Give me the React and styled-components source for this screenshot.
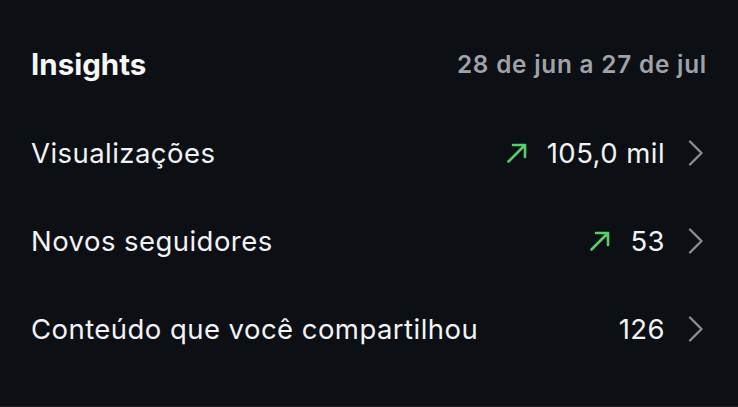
import React from 'react';
import styled, { createGlobalStyle } from 'styled-components';

const GlobalStyle = createGlobalStyle`
  html, body {
    margin: 0;
    padding: 0;
    background: #0c0f14;
  }

  body {
    font-family: Inter, "Noto Sans", "Liberation Sans", sans-serif;
    -webkit-font-smoothing: antialiased;
  }
`;

const StyledPanel = styled.section`
  box-sizing: border-box;
  height: 407px;
  padding: 20px 31px 0 31px;
  background: #0c0f14;
  border-bottom: 1px solid #1b1e23;
  color: #f5f5f7;
`;

const StyledHeader = styled.header`
  display: flex;
  align-items: center;
  justify-content: space-between;
  height: 88px;
  margin-bottom: 1px;
`;

const StyledTitle = styled.h2`
  margin: 0;
  font-size: 29.5px;
  font-weight: 700;
  letter-spacing: 0;
  color: #f7f7f8;
`;

const StyledRange = styled.span`
  font-size: 24.3px;
  font-weight: 600;
  color: #a0a2a9;
  letter-spacing: 0.8px;
`;

const StyledList = styled.ul`
  list-style: none;
  margin: 0;
  padding: 0;
`;

const StyledRow = styled.li`
  display: flex;
  align-items: center;
  justify-content: space-between;
  height: 88px;
`;

const StyledLabel = styled.span`
  font-size: 27.5px;
  font-weight: 400;
  letter-spacing: 0.45px;
  color: #f3f3f5;
`;

const StyledValueGroup = styled.div`
  display: flex;
  align-items: center;
`;

const StyledTrend = styled.svg`
  width: 22px;
  height: 22px;
  margin-right: 19px;
  color: #56cf68;
`;

const StyledValue = styled.span`
  font-size: 27.5px;
  font-weight: 400;
  letter-spacing: 0.45px;
  color: #f3f3f5;
`;

const StyledChevron = styled.svg`
  width: 20px;
  height: 26px;
  margin-left: 22px;
  color: #8d8e93;
`;

const TrendUp = () => (
  <StyledTrend viewBox="0 0 22 22" fill="none">
    <path
      d="M2.5 19.5L19 3M7 3H19V15"
      stroke="currentColor"
      strokeWidth="2.6"
      strokeLinecap="round"
      strokeLinejoin="round"
    />
  </StyledTrend>
);

const Chevron = () => (
  <StyledChevron viewBox="0 0 20 26" fill="none">
    <path
      d="M3 1.5L14.5 13L3 24.5"
      stroke="currentColor"
      strokeWidth="2.3"
      strokeLinecap="round"
      strokeLinejoin="round"
    />
  </StyledChevron>
);

const metrics = [
  { label: 'Visualizações', value: '105,0 mil', trending: true },
  { label: 'Novos seguidores', value: '53', trending: true },
  { label: 'Conteúdo que você compartilhou', value: '126', trending: false },
];

const App = () => (
  <>
    <GlobalStyle />
    <StyledPanel>
      <StyledHeader>
        <StyledTitle>Insights</StyledTitle>
        <StyledRange>28 de jun a 27 de jul</StyledRange>
      </StyledHeader>
      <StyledList>
        {metrics.map(({ label, value, trending }) => (
          <StyledRow key={label}>
            <StyledLabel>{label}</StyledLabel>
            <StyledValueGroup>
              {trending && <TrendUp />}
              <StyledValue>{value}</StyledValue>
              <Chevron />
            </StyledValueGroup>
          </StyledRow>
        ))}
      </StyledList>
    </StyledPanel>
  </>
);

export default App;
